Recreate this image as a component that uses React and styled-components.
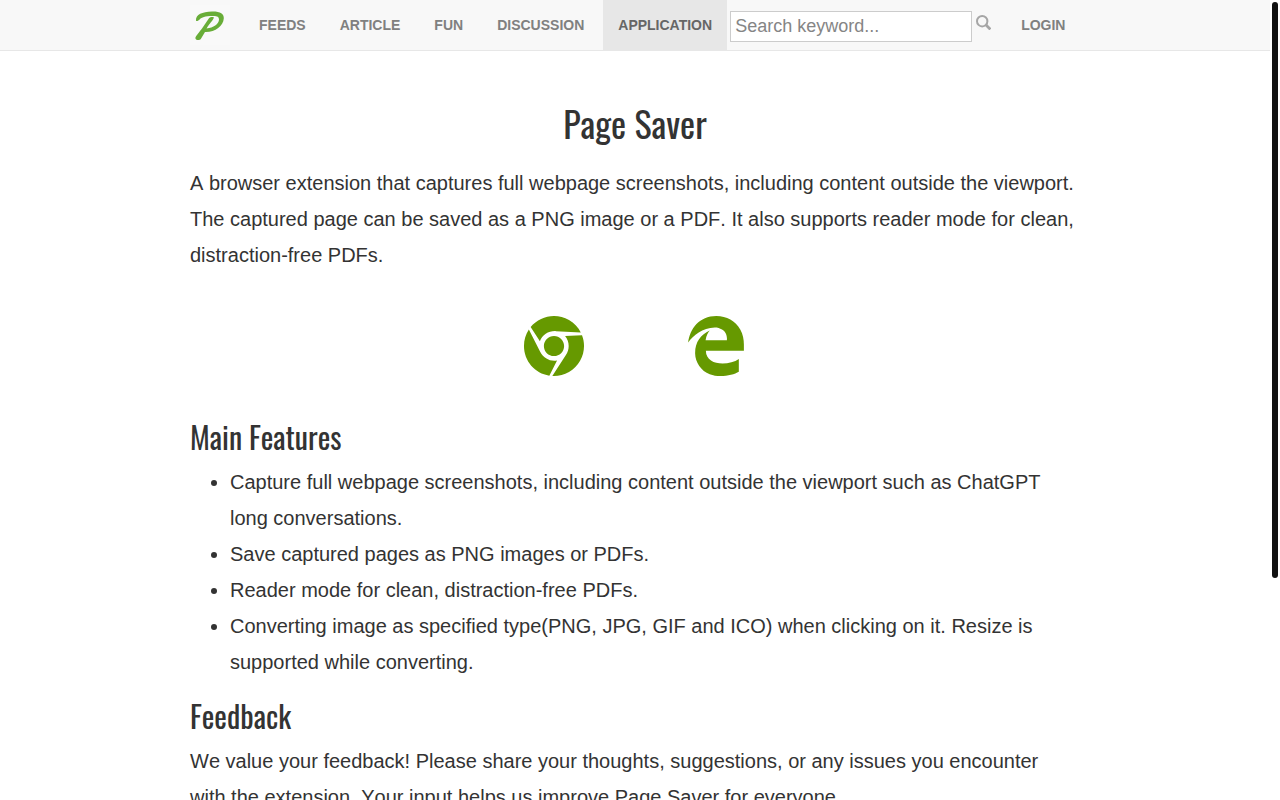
import React from "react";
import styled, { createGlobalStyle } from "styled-components";
import { FaChrome, FaEdgeLegacy } from "react-icons/fa";

const links = [
	{ id: 1, name: "Feeds", url: "#feeds" },
	{ id: 2, name: "Article", url: "#article" },
	{ id: 3, name: "Fun", url: "#fun" },
	{ id: 4, name: "Discussion", url: "#discussion" },
	{ id: 5, name: "Application", url: "#application", active: true },
];

const features = [
	"Capture full webpage screenshots, including content outside the viewport such as ChatGPT long conversations.",
	"Save captured pages as PNG images or PDFs.",
	"Reader mode for clean, distraction-free PDFs.",
	"Converting image as specified type(PNG, JPG, GIF and ICO) when clicking on it. Resize is supported while converting.",
];

const Logo = () => (
	<svg width="40" height="40" viewBox="0 0 40 40" aria-hidden="true">
		<rect width="40" height="40" fill="#f9f9f9" />
		<path
			fill="#68ad38"
			d="M6 15.2C5.8 9.6 12 7 22 6.6C30 6.4 34.2 9 33.8 13.6C33.2 21.4 25 27.4 15 27L10.8 34C9.6 35.8 5 35.4 5.4 32.8C5.8 31 9.6 27 12 23.6L18.8 13.4C19.8 12 24.4 11.4 23.8 13C23.2 14.8 18.6 20 16.6 23.4C23.4 23 28.8 19 29 14.8C29 11.6 27 10.8 22.4 11C15 11.2 11.6 12.4 9.8 14.2C8.6 15.4 6 17.2 6 15.2Z"
		/>
	</svg>
);

const SearchIcon = () => (
	<svg width="15" height="15" viewBox="0 0 15 15" fill="none" stroke="#a6a6a6" aria-hidden="true">
		<circle cx="6.2" cy="6.2" r="5.2" strokeWidth="2" />
		<path d="M9.8 9.8L14.4 14.4" strokeWidth="2.8" />
	</svg>
);

const Navbar = () => {
	return (
		<Header>
			<Nav aria-label="Main">
				<Brand href="#home" aria-label="Home">
					<Logo />
				</Brand>
				<NavList>
					{links.map(({ id, name, url, active }) => (
						<li key={id}>
							<NavLink href={url} $active={active} aria-current={active ? "page" : undefined}>
								{name}
							</NavLink>
						</li>
					))}
				</NavList>
				<SearchForm role="search" onSubmit={(e) => e.preventDefault()}>
					<SearchInput type="text" aria-label="Search keyword" placeholder="Search keyword..." />
					<SearchButton type="submit" aria-label="Search">
						<SearchIcon />
					</SearchButton>
				</SearchForm>
				<NavLink href="#login">Login</NavLink>
			</Nav>
		</Header>
	);
};

const App = () => {
	return (
		<>
			<GlobalStyle />
			<Page>
				<Navbar />
				<Main>
					<Title>Page Saver</Title>
					<p>
						A browser extension that captures full webpage screenshots, including content outside the
						viewport. The captured page can be saved as a PNG image or a PDF. It also supports reader
						mode for clean, distraction-free PDFs.
					</p>
					<Stores>
						<a href="#chrome" aria-label="Chrome extension">
							<FaChrome />
						</a>
						<a href="#edge" aria-label="Edge extension">
							<FaEdgeLegacy />
						</a>
					</Stores>
					<Heading>Main Features</Heading>
					<FeatureList>
						{features.map((feature) => (
							<li key={feature}>{feature}</li>
						))}
					</FeatureList>
					<Heading>Feedback</Heading>
					<p>
						We value your feedback! Please share your thoughts, suggestions, or any issues you
						encounter with&nbsp;the extension. Your input helps us improve Page Saver for everyone.
					</p>
				</Main>
			</Page>
			<ScrollThumb />
		</>
	);
};

const GlobalStyle = createGlobalStyle`
	*, *::before, *::after {
		box-sizing: border-box;
	}

	body {
		margin: 0;
		background: #fff;
		color: #333;
		font-family: "Liberation Sans", Arial, sans-serif;
		font-size: 20px;
		font-kerning: none;
		line-height: 36px;
	}
`;

/* the right gutter is kept free for the scroll thumb */
const Page = styled.div`
	padding-right: 10px;
`;

const Header = styled.header`
	background: #f8f8f8;
	border-bottom: 1px solid #e7e7e7;
`;

const Nav = styled.nav`
	display: flex;
	align-items: center;
	max-width: 890px;
	height: 50px;
	margin: 0 auto;
	font-kerning: normal;
`;

const Brand = styled.a`
	display: flex;
	margin-right: 14px;
`;

const NavList = styled.ul`
	display: flex;
	gap: 4px;
	margin: 0;
	padding: 0;
	list-style: none;
`;

const NavLink = styled.a`
	display: block;
	padding: 15px;
	background: ${({ $active }) => ($active ? "#e7e7e7" : "transparent")};
	color: ${({ $active }) => ($active ? "#666" : "#808080")};
	font-size: 14px;
	font-weight: bold;
	line-height: 20px;
	text-decoration: none;
	text-transform: uppercase;
`;

const SearchForm = styled.form`
	display: flex;
	gap: 4px;
	flex: 1;
	margin: 2px 15px 0 3px;
`;

const SearchInput = styled.input`
	flex: 1;
	min-width: 0;
	height: 31px;
	padding: 0 4px;
	border: 1px solid #ccc;
	background: #fff;
	color: #333;
	font-family: inherit;
	font-size: 18px;

	&::placeholder {
		color: #858585;
	}
`;

const SearchButton = styled.button`
	display: flex;
	align-items: flex-start;
	padding: 4px 0 0;
	border: 0;
	background: transparent;
	cursor: pointer;
`;

const Main = styled.main`
	max-width: 890px;
	margin: 0 auto;
	padding-top: 48px;

	p {
		margin: 0;
	}
`;

const Title = styled.h1`
	margin: 0 0 18px;
	font-family: Oswald, "Liberation Sans Narrow", sans-serif;
	font-size: 36px;
	font-weight: normal;
	line-height: 48px;
	text-align: center;
`;

const Heading = styled.h2`
	margin: 0 0 6px;
	font-family: Oswald, "Liberation Sans Narrow", sans-serif;
	font-size: 30px;
	font-weight: normal;
	line-height: 42px;
`;

const Stores = styled.div`
	display: flex;
	justify-content: center;
	gap: 100px;
	padding: 42px 0 39px;

	a {
		display: flex;
		color: #690;
		font-size: 62px;
	}
`;

const FeatureList = styled.ul`
	margin: 0 0 15px;
	padding-left: 40px;
`;

const ScrollThumb = styled.div`
	position: fixed;
	top: 2px;
	right: 2px;
	width: 6px;
	height: 72vh;
	border-radius: 3px;
	background: #111;
`;

export default App;
